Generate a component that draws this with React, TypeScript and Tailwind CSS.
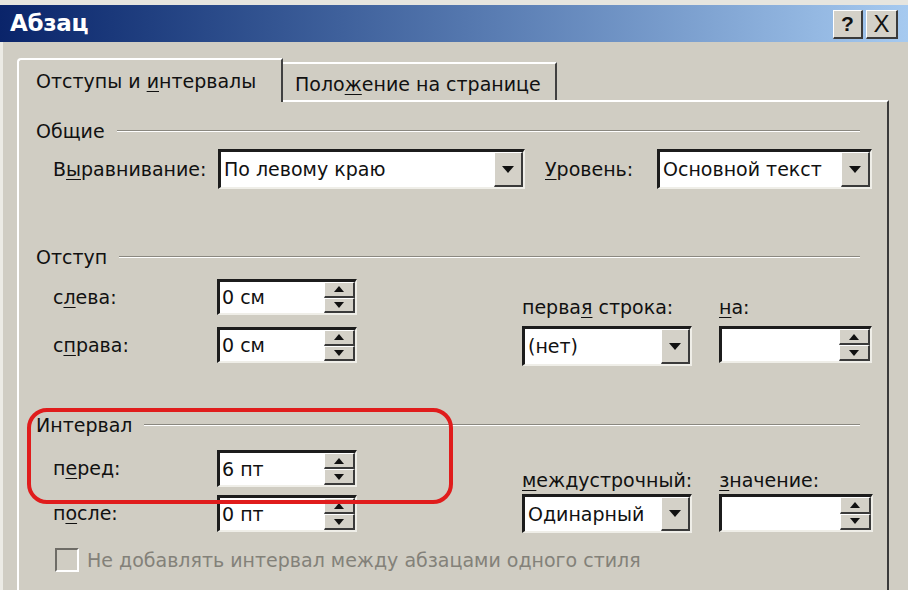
import React from 'react';

const sunken = 'border-t-[3px] border-l-[3px] border-b-2 border-r-2 border-t-[#1c1c1c] border-l-[#1c1c1c] border-b-[#efeee8] border-r-[#efeee8]';
const raised = 'bg-[#d4d1c8] border-t border-l border-t-white border-l-white border-b-2 border-r-2 border-b-[#3a3a3a] border-r-[#3a3a3a]';

const U = ({ children }: { children: React.ReactNode }) => <span className="underline underline-offset-[3px]">{children}</span>;

const ArrowDown = ({ w = 12 }: { w?: number }) => (
  <svg width={w} height={w / 2 + 1} viewBox="0 0 12 7">
    <path d="M0 0 H12 L6 7 Z" fill="#111" />
  </svg>
);

const ArrowUp = ({ w = 10 }: { w?: number }) => (
  <svg width={w} height={w / 2 + 1} viewBox="0 0 12 7">
    <path d="M0 7 H12 L6 0 Z" fill="#111" />
  </svg>
);

const Select = ({ value, className }: { value: string; className: string }) => (
  <div className={`${sunken} bg-white flex ${className}`}>
    <div className="flex-1 flex items-center pl-[3px] whitespace-nowrap overflow-hidden">{value}</div>
    <div className={`${raised} w-[29px] flex items-center justify-center`}>
      <ArrowDown />
    </div>
  </div>
);

const Spin = ({ value, className }: { value: string; className: string }) => (
  <div className={`${sunken} bg-white flex ${className}`}>
    <div className="flex-1 flex items-center pl-[2px] whitespace-nowrap">{value}</div>
    <div className="w-[31px] flex flex-col">
      <div className={`${raised} flex-1 flex items-center justify-center`}>
        <ArrowUp />
      </div>
      <div className={`${raised} flex-1 flex items-center justify-center`}>
        <ArrowDown w={10} />
      </div>
    </div>
  </div>
);

const Header = ({ label }: { label: string }) => (
  <div className="flex items-center h-[24px] w-[824px]">
    <span>{label}</span>
    <div className="flex-1 ml-[12px] border-t border-t-[#8a8880] border-b border-b-white" />
  </div>
);

export default function App() {
  return (
    <div
      className="relative w-[908px] h-[590px] overflow-hidden bg-[#d0cdc3] text-[19px] text-[#111]"
      style={{ fontFamily: '"DejaVu Sans", Verdana, sans-serif' }}
    >
      <div className="h-[5px] bg-[#e6e5df]" />
      <div className="h-[37px] flex items-center justify-between bg-gradient-to-r from-[#0a246a] to-[#a6caf0] pl-[10px] pr-[10px]">
        <span className="text-white font-bold text-[23px] tracking-[-0.3px]">Абзац</span>
        <div className="flex gap-[3px] pt-[1px]">
          <div className={`${raised} w-[30px] h-[29px] flex items-center justify-center font-bold text-[21px]`} style={{ fontFamily: '"Liberation Sans", Arial, sans-serif' }}>?</div>
          <div className={`${raised} w-[32px] h-[29px] flex items-center justify-center text-[24px]`} style={{ fontFamily: '"Liberation Sans", Arial, sans-serif' }}>X</div>
        </div>
      </div>

      <div className="border-l-[3px] border-l-[#ecebe5] pl-[14px] pt-[16px] pr-[19px]">
        {/* tabs */}
        <div className="flex items-end h-[42px] relative z-10">
          <div className="w-[266px] h-[44px] -mb-[2px] bg-[#d0cdc3] border-t-2 border-l-2 border-t-white border-l-white border-r-2 border-r-[#404040] rounded-tl-[4px] flex items-center pl-[17px]">
            <span>Отступы и <U>и</U>нтервалы</span>
          </div>
          <div className="w-[274px] h-[38px] border-t-2 border-t-white border-r-2 border-r-[#404040] flex items-center pl-[12px] pt-[4px]">
            <span>Поло<U>ж</U>ение на странице</span>
          </div>
        </div>

        {/* panel */}
        <div className="h-[500px] border-t-2 border-l-2 border-t-white border-l-white border-r-2 border-r-[#3a3a3a] pl-[17px]">
          <div className="mt-[17px]">
            <Header label="Общие" />
          </div>
          <div className="flex items-center mt-[6px] h-[40px] pl-[17px]">
            <span className="w-[165px]">В<U>ы</U>равнивание:</span>
            <Select value="По левому краю" className="w-[307px] h-[40px]" />
            <span className="ml-[20px] w-[112px]"><U>У</U>ровень:</span>
            <Select value="Основной текст" className="w-[215px] h-[40px]" />
          </div>

          <div className="mt-[56px]">
            <Header label="Отступ" />
          </div>
          <div className="flex mt-[10px] pl-[17px]">
            <div className="flex flex-col gap-[12px]">
              <div className="flex items-center h-[36px]">
                <span className="w-[164px]">с<U>л</U>ева:</span>
                <Spin value="0 см" className="w-[140px] h-[36px]" />
              </div>
              <div className="flex items-center h-[36px]">
                <span className="w-[164px]">с<U>п</U>рава:</span>
                <Spin value="0 см" className="w-[140px] h-[36px]" />
              </div>
            </div>
            <div className="ml-[165px] flex flex-col pt-[16px]">
              <div className="h-[24px] flex items-center"><span>перва<U>я</U> строка:</span></div>
              <Select value="(нет)" className="mt-[7px] w-[170px] h-[40px]" />
            </div>
            <div className="ml-[27px] flex flex-col pt-[16px]">
              <div className="h-[24px] flex items-center"><span><U>н</U>а:</span></div>
              <Spin value="" className="mt-[7px] w-[153px] h-[37px]" />
            </div>
          </div>

          <div className="mt-[47px]">
            <Header label="Интервал" />
          </div>
          <div className="flex mt-[13px] pl-[17px]">
            <div className="flex flex-col gap-[8px]">
              <div className="flex items-center h-[37px]">
                <span className="w-[164px]">п<U>е</U>ред:</span>
                <Spin value="6 пт" className="w-[140px] h-[37px]" />
              </div>
              <div className="flex items-center h-[37px]">
                <span className="w-[164px]">п<U>о</U>сле:</span>
                <Spin value="0 пт" className="w-[140px] h-[37px]" />
              </div>
            </div>
            <div className="ml-[165px] flex flex-col pt-[18px]">
              <div className="h-[24px] flex items-center"><span><U>м</U>еждустрочный:</span></div>
              <Select value="Одинарный" className="mt-[2px] w-[170px] h-[39px]" />
            </div>
            <div className="ml-[27px] flex flex-col pt-[18px]">
              <div className="h-[24px] flex items-center"><span><U>з</U>начение:</span></div>
              <Spin value="" className="mt-[2px] w-[154px] h-[38px]" />
            </div>
          </div>

          <div className="flex items-center h-[24px] mt-[15px] pl-[19px]">
            <div className="w-[24px] h-[24px] border-t-2 border-l-2 border-t-[#6e6c66] border-l-[#6e6c66] border-b-2 border-r-2 border-b-white border-r-white bg-[#d0cdc3]" />
            <span className="ml-[8px] text-[#838179]">Не добавлять интервал между абзацами одного стиля</span>
          </div>
        </div>
      </div>

      {/* annotation */}
      <div className="absolute left-[27px] top-[408px] w-[426px] h-[96px] border-4 border-[#e01c1c] rounded-[20px] pointer-events-none" />
    </div>
  );
}
